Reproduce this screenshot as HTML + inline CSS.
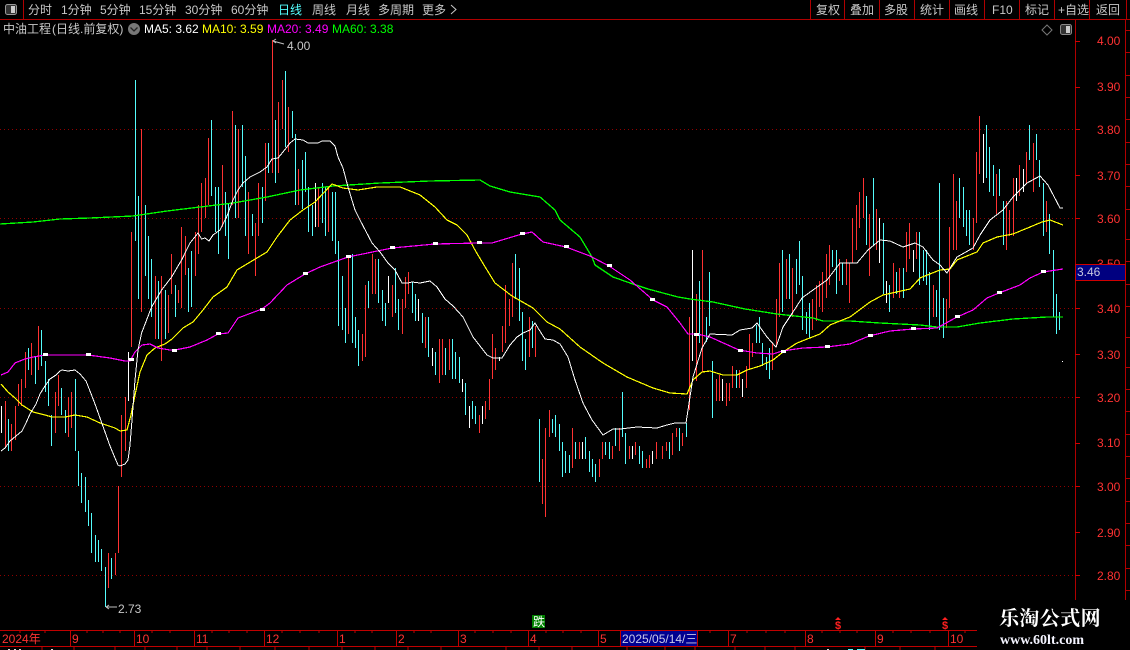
<!DOCTYPE html>
<html lang="zh"><head><meta charset="utf-8"><title>中油工程</title>
<style>
html,body{margin:0;padding:0;background:#000;width:1130px;height:650px;overflow:hidden}
svg{display:block}
text{font-family:"Liberation Sans","Noto Sans CJK SC",sans-serif;font-size:12px;white-space:pre}
.g{fill:#c8c8c8}.r{fill:#ff3232}
</style></head><body>
<svg width="1130" height="650" viewBox="0 0 1130 650" xmlns="http://www.w3.org/2000/svg">
<rect width="1130" height="650" fill="#000"/>
<!-- grid -->
<g stroke="#900000" stroke-dasharray="1 3" shape-rendering="crispEdges">
<path d="M0 129.5H1075M0 218.5H1075M0 308.5H1075M0 397.5H1075M0 486.5H1075M0 575.5H1075"/>
</g>
<!-- bars -->
<g fill="none" shape-rendering="crispEdges" transform="translate(.5 0)">
<path stroke="#ff3232" d="M5 401V447M11 424V451M15 406V440M18 384V406M21 379V406M25 352V388M31 343V375M38 326V370M55 392V433M58 375V406M68 397V437M71 392V428M108 553V588M115 553V575M118 486V553M121 415V477M125 397V451M131 232V347M141 129V312M155 276V339M161 276V361M168 295V333M171 254V294M178 290V303M181 227V308M185 236V275M195 232V276M198 205V254M201 183V232M205 178V218M208 138V205M222 165V227M232 111V205M238 129V218M248 192V254M255 223V276M258 183V236M265 143V201M272 40V173M278 102V173M282 80V129M288 107V152M298 169V205M318 188V227M328 187V232M348 257V334M362 334V361M365 285V357M372 254V294M375 259V294M392 285V317M402 299V334M405 277V308M408 272V294M425 317V348M439 339V383M442 339V375M449 339V370M479 415V433M485 401V419M489 379V410M492 334V379M495 348V370M502 326V352M505 285V343M509 299V326M512 263V317M529 317V357M535 326V357M542 459V504M545 428V517M549 410V437M572 428V468M579 442V459M599 459V477M602 442V459M612 446V459M619 428V451M629 446V459M635 442V455M646 459V468M649 455V468M656 442V459M662 446V459M666 442V451M672 433V455M676 428V437M682 433V446M689 317V410M696 294V381M702 250V372M716 379V401M719 375V401M726 383V406M729 383V401M732 366V388M739 370V388M746 366V388M749 334V370M752 343V357M772 343V370M776 299V347M779 263V317M786 259V299M792 268V317M812 299V330M816 285V321M819 281V307M822 272V312M826 254V298M829 245V285M839 259V281M846 259V285M849 263V303M852 218V263M856 205V250M859 192V228M863 178V218M869 214V276M876 209V250M893 263V298M899 268V298M906 232V272M909 223V259M916 232V259M933 285V317M946 299V328M949 227V308M953 174V250M956 201V250M973 218V250M976 152V223M979 116V174M996 174V214M1006 201V250M1009 210V236M1013 178V236M1019 165V196M1026 152V183M1033 143V192M1046 201V232"/>
<path stroke="#54fcfc" d="M8 419V451M28 348V370M35 357V384M41 330V366M45 361V392M48 379V406M51 415V446M61 388V415M65 410V433M75 379V451M78 451V486M81 473V503M85 477V512M88 500V526M91 513V553M95 535V562M98 540V562M101 549V571M105 567V607M111 558V579M135 80V241M138 196V299M145 205V276M148 236V299M151 259V317M158 281V339M165 290V339M175 285V317M188 268V312M191 251V307M211 120V196M215 187V232M218 187V254M225 192V236M228 203V259M235 125V218M242 125V187M245 156V236M252 214V236M262 187V223M268 143V173M275 120V183M285 71V147M292 111V138M295 134V205M302 160V209M305 152V192M308 187V232M312 205V236M322 183V223M325 187V236M332 192V241M335 192V254M338 241V326M342 276V330M345 308V343M352 254V343M355 317V348M358 330V366M368 281V308M378 259V303M382 290V321M385 303V326M395 268V313M398 299V330M412 282V313M415 294V321M422 313V343M428 317V357M435 352V375M445 348V375M452 339V379M455 352V379M459 357V383M465 383V415M472 401V419M475 406V424M515 254V299M519 268V321M522 312V361M525 339V370M532 321V348M539 419V482M552 419V433M555 415V437M559 424V451M562 442V477M565 451V473M569 455V473M575 442V459M585 437V459M589 451V472M592 459V477M595 464V482M605 442V455M609 442V459M615 428V446M622 392V437M625 433V464M639 446V464M642 451V468M669 442V459M679 428V451M686 423V437M699 281V343M706 317V342M709 272V326M712 361V418M736 370V388M756 325V343M759 317V343M762 343V366M766 357V370M769 348V379M782 250V312M789 254V299M796 259V294M799 241V285M802 276V330M806 312V334M809 303V338M832 250V267M836 250V294M842 263V285M866 196V245M873 178V245M883 223V294M889 285V312M896 272V294M903 268V298M919 232V285M923 250V281M926 250V285M929 272V330M936 290V317M939 183V330M943 298V338M959 178V218M963 187V227M966 210V236M969 210V245M986 125V178M989 147V192M993 165V196M999 169V196M1003 201V245M1029 125V160M1036 134V160M1039 160V187M1043 183V236M1049 214V254M1053 250V317M1056 294V334M1059 312V330"/>
<path stroke="#fff" d="M1 406V433M128 352V401M315 183V227M388 276V303M418 299V321M432 348V366M462 379V392M469 406V428M482 406V424M499 357V361M582 442V459M632 446V459M652 451V464M692 250V361M722 379V401M742 379V397M879 218V263M886 281V303M913 250V272M983 134V183M1016 178V201M1023 169V192M1062 361V362"/>
</g>
<!-- MA lines -->
<g fill="none" stroke-width="1" stroke-linejoin="round" shape-rendering="crispEdges">
<polyline stroke="#00ff00" stroke-width="1.3" points="0,224 33,222 60,219 90,218 133,216 167,211 200,207 233,203 267,197 300,190 333,186 380,183 430,181 480,180 490,186 510,192 540,197 555,210 560,220 580,237 592,257 595,265 613,277 630,283 648,289 678,297 690,299 713,302 745,309 777,314 813,318 823,321 850,321 880,323 920,325 937,327 957,327 980,323 1013,319 1047,317 1063,317"/>
<polyline stroke="#ffff00" stroke-width="1.2" points="1,384 8,392 15,398 22,405 33,412 45,415 52,417 65,417 75,415 87,417 100,423 115,428 120,431 127,430 131,415 135,395 140,372 147,355 155,348 165,344 172,339 183,328 193,322 203,310 213,297 227,287 237,270 257,258 267,252 277,237 290,220 303,210 315,202 332,184 343,188 358,190 377,187 400,187 420,195 435,207 447,220 457,225 467,235 475,250 487,270 495,283 512,296 533,308 547,322 560,329 580,347 603,363 627,377 653,388 670,393 687,394 693,380 702,372 710,371 723,375 737,375 747,370 760,366 773,360 783,352 797,343 820,334 830,325 850,317 870,302 883,295 910,289 920,278 940,270 950,269 957,260 977,252 983,243 997,237 1013,234 1030,227 1042,222 1050,220 1063,225"/>
<polyline stroke="#ff00ff" stroke-width="1.2" points="1,375 8,372 15,363 25,359 33,357 45,355 88,355 110,358 125,361 130,361 135,352 142,345 150,344 158,348 170,350 175,350 190,347 207,340 218,334 228,333 238,318 262,309 270,303 287,285 305,274 320,267 348,257 392,248 435,244 479,243 492,243 522,234 532,232 543,242 566,247 590,256 609,266 630,280 653,300 667,307 680,323 688,334 697,334 710,337 739,350 757,353 773,354 782,351 803,348 827,347 850,344 869,336 890,331 913,329 937,328 957,317 973,310 987,298 999,293 1020,285 1030,278 1043,272 1063,269"/>
<polyline stroke="#fff" points="1,451 5,448 10,441 16,436 22,431 26,423 30,414 36,404 40,394 45,386 50,379 56,375 60,371 62,370 68,371 75,370 80,374 86,381 90,391 95,404 100,418 105,432 110,446 115,458 118,465 120,466 125,464 128,460 130,445 132,420 135,380 138,350 141.6,333 151.6,307 161.6,290 171.6,277 181.6,260 190,243 198,233 201.6,239 205,238 209,241 213,235 220,230 226.6,217 233,200 238,190 243,183 250,177 260,172 267,167 272,159 278,158 283,152 290,143 295,139 303,140 308,143 318,143 322,141 330,141 335,146 338,157 343,168 348,187 355,210 360,220 372,243 380,252 388,263 395,270 402,283 408,283 412,282 420,283 430,281 437,287 445,299 453,306 463,317 473,337 487,355 493,358 502,358 510,345 517,337 523,333 530,330 535,323 538,328 545,339 553,340 560,344 568,357 575,380 583,403 592,420 603,435 613,429 620,429 637,427 657,428 667,425 675,423 686,423 688,410 693,377 702,348 710,334 732,335 740,330 752,328 757,323 767,337 776,347 783,327 793,312 802,298 813,290 827,280 840,263 857,263 868,250 880,240 890,241 903,247 915,243 923,247 933,260 940,265 947,273 957,257 973,248 980,235 990,220 1003,210 1013,197 1027,183 1040,176 1048,185 1060,208 1063,208"/>
</g>
<!-- MA20 markers -->
<g fill="#fff" shape-rendering="crispEdges">
<path d="M43 353h5v3h-5zM86 353h5v3h-5zM129 358h5v3h-5zM172 349h5v3h-5zM216 332h5v3h-5zM260 308h5v3h-5zM303 272h5v3h-5zM346 255h5v3h-5zM390 246h5v3h-5zM433 242h5v3h-5zM477 241h5v3h-5zM520 232h5v3h-5zM564 245h5v3h-5zM607 264h5v3h-5zM650 298h5v3h-5zM694 333h5v3h-5zM738 349h5v3h-5zM781 350h5v3h-5zM825 345h5v3h-5zM868 334h5v3h-5zM911 327h5v3h-5zM955 315h5v3h-5zM997 291h5v3h-5zM1041 270h5v3h-5z"/>
</g>
<!-- annotations -->
<g fill="none" stroke="#c0c0c0">
<path d="M273 41L284 44M273 41l3 -2M273 41l3 2"/>
<path d="M106 607H117M106 607l3 -2M106 607l3 2"/>
</g>
<text x="287" y="50" class="g">4.00</text>
<text x="118" y="613" class="g">2.73</text>

<!-- toolbar -->
<g fill="none" stroke="#b00000" shape-rendering="crispEdges">
<path d="M0 19.5H1130M23.5 0V19M810.5 0V19M844.5 0V19M879.5 0V19M914.5 0V19M949.5 0V19M984.5 0V19M1019.5 0V19M1054.5 0V19M1089.5 0V19M1126.5 0V19"/>
</g>
<rect x="5.5" y="4.5" width="11" height="10" rx="2" fill="#333" stroke="#999"/>
<rect x="11" y="6" width="4" height="7" fill="#ccc"/>
<g class="g">
<text x="28" y="14">分时</text><text x="61" y="14">1分钟</text><text x="100" y="14">5分钟</text>
<text x="139" y="14">15分钟</text><text x="185" y="14">30分钟</text><text x="231" y="14">60分钟</text>
<text x="278" y="14" style="fill:#54ffff">日线</text><text x="312" y="14">周线</text><text x="346" y="14">月线</text>
<text x="378" y="14">多周期</text><text x="422" y="14">更多</text>
<text x="816" y="14">复权</text><text x="850" y="14">叠加</text><text x="884" y="14">多股</text>
<text x="920" y="14">统计</text><text x="954" y="14">画线</text><text x="992" y="14">F10</text>
<text x="1025" y="14">标记</text><text x="1058" y="14">+自选</text><text x="1096" y="14">返回</text>
</g>
<path d="M451 5l5 4.5-5 4.5" fill="none" stroke="#c8c8c8"/>

<!-- title line -->
<text x="3" y="33" class="g">中油工程</text><text x="52" y="33" class="g">(日线.前复权)</text>
<circle cx="134" cy="29" r="6" fill="#777"/>
<path d="M130.5 27.5l3.5 3.5 3.5-3.5" fill="none" stroke="#222" stroke-width="1.3"/>
<text x="144" y="33" fill="#fff">MA5: 3.62</text>
<text x="202" y="33" fill="#ff0">MA10: 3.59</text>
<text x="267" y="33" fill="#f0f">MA20: 3.49</text>
<text x="332" y="33" fill="#0f0">MA60: 3.38</text>
<path d="M1047 25l5 5-5 5-5-5z" fill="none" stroke="#777"/>
<rect x="1060.5" y="24.5" width="11" height="10" rx="2" fill="#333" stroke="#888"/>
<rect x="1066" y="26" width="4" height="7" fill="#ccc"/>

<!-- right axis -->
<g fill="none" stroke="#b00000" shape-rendering="crispEdges">
<path d="M1075.5 19V600M1125.5 19V600"/>
<path stroke="#d00000" d="M1075 41.5h5M1075 87.5h5M1075 129.5h5M1075 175.5h5M1075 218.5h5M1075 264.5h5M1075 308.5h5M1075 354.5h5M1075 397.5h5M1075 443.5h5M1075 486.5h5M1075 532.5h5M1075 575.5h5"/>
<path d="M1126 30.5h4M1126 52.5h4M1126 75.5h4M1126 97.5h4M1126 119.5h4M1126 142.5h4M1126 164.5h4M1126 186.5h4M1126 209.5h4M1126 239.5h4M1126 261.5h4M1126 284.5h4M1126 306.5h4M1126 337.5h4M1126 367.5h4M1126 389.5h4M1126 411.5h4M1126 434.5h4M1126 456.5h4M1126 478.5h4M1126 501.5h4M1126 523.5h4M1126 545.5h4M1126 568.5h4M1126 590.5h4"/>
</g>
<g class="r">
<text x="1097" y="45">4.00</text><text x="1097" y="91">3.90</text><text x="1097" y="134">3.80</text>
<text x="1097" y="180">3.70</text><text x="1097" y="223">3.60</text><text x="1097" y="268">3.50</text>
<text x="1097" y="313">3.40</text><text x="1097" y="359">3.30</text><text x="1097" y="402">3.20</text>
<text x="1097" y="447">3.10</text><text x="1097" y="491">3.00</text><text x="1097" y="537">2.90</text>
<text x="1097" y="580">2.80</text>
</g>
<rect x="1075.5" y="264.5" width="50" height="16" fill="#000080" stroke="#d00000" shape-rendering="crispEdges"/>
<text x="1077" y="276" fill="#c8c8e0">3.46</text>

<!-- signals -->
<rect x="532" y="615" width="13" height="13" fill="#008000"/>
<text x="533" y="626" fill="#fff">跌</text>
<text x="838" y="629" fill="#ff2020" text-anchor="middle" style="font-size:11px;font-weight:bold">$</text>
<text x="945" y="629" fill="#ff2020" text-anchor="middle" style="font-size:11px;font-weight:bold">$</text>
<path d="M835 620l3-3 3 3zM942 620l3-3 3 3z" fill="#ff2020"/>

<!-- time axis -->
<g fill="none" stroke="#c00000" shape-rendering="crispEdges">
<path d="M0 630.5H977M0 646.5H977"/>
<path d="M70.5 630V646M134.5 630V646M194.5 630V646M264.5 630V646M337.5 630V646M396.5 630V646M458.5 630V646M528.5 630V646M598.5 630V646M728.5 630V646M805.5 630V646M875.5 630V646M948.5 630V646"/>
<path d="M20 631v2M45 631v2M87 631v2M103 631v2M120 631v2M152 631v2M170 631v2M212 631v2M229 631v2M247 631v2M282 631v2M300 631v2M319 631v2M355 631v2M372 631v2M414 631v2M431 631v2M475 631v2M493 631v2M511 631v2M546 631v2M563 631v2M581 631v2M710 631v2M747 631v2M766 631v2M785 631v2M822 631v2M840 631v2M857 631v2M893 631v2M911 631v2M930 631v2M965 631v2"/>
<path d="M42 647v3M74 647v3M115 647v3M145 647v3M177 647v3M207 647v3M240 647v3M275 647v3M309 647v3M342 647v3M375 647v3M408 647v3M441 647v3M506 647v3M539 647v3M572 647v3M627 647v3M665 647v3M695 647v3M735 647v3M765 647v3M795 647v3M865 647v3M900 647v3M935 647v3"/>
</g>
<rect x="620.5" y="630.5" width="77" height="16" fill="#000090" stroke="#c00000" shape-rendering="crispEdges"/>
<text x="622" y="643" fill="#c8c8e8">2025/05/14/三</text>
<g class="r">
<text x="2" y="643">2024年</text><text x="72" y="643">9</text><text x="136" y="643">10</text>
<text x="196" y="643">11</text><text x="266" y="643">12</text><text x="339" y="643">1</text>
<text x="398" y="643">2</text><text x="460" y="643">3</text><text x="530" y="643">4</text>
<text x="600" y="643">5</text><text x="730" y="643">7</text><text x="807" y="643">8</text>
<text x="877" y="643">9</text><text x="950" y="643">10</text>
</g>
<!-- clipped row under the axis -->
<g shape-rendering="crispEdges">
<path d="M8 649h2v1h-2zM14 649h2v1h-2zM19 649h2v1h-2zM51 649h2v1h-2zM827 649h2v1h-2z" fill="#ddd"/>
<path d="M848 649h5v1h-5zM857 649h8v1h-8z" fill="#54fcfc"/>
</g>
<!-- watermark -->
<text x="999" y="625" fill="#fff" style="font-family:'Liberation Serif','Noto Serif CJK SC',serif;font-size:20px;font-weight:bold;letter-spacing:.4px">乐淘公式网</text>
<text x="1000" y="644" fill="#f4f4ff" style="font-family:'Liberation Serif',serif;font-size:14px;font-weight:bold">www.60lt.com</text>
</svg>
</body></html>
